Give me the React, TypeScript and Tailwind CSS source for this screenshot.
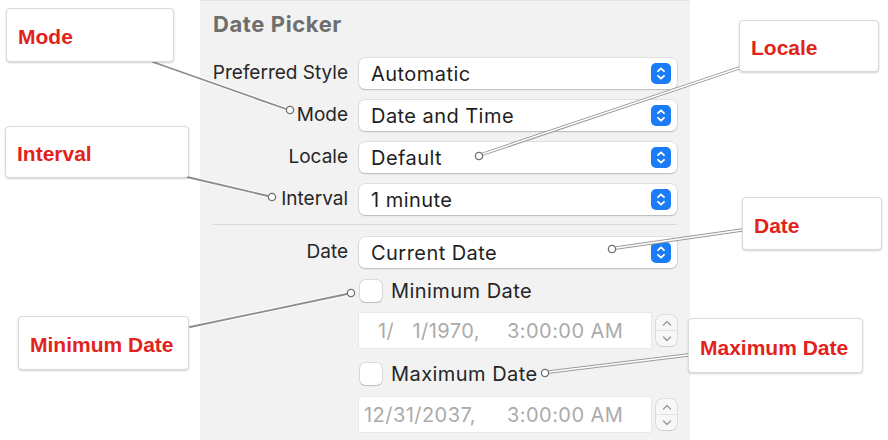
import React from "react";

const font = { fontFamily: "Inter, 'Noto Sans', sans-serif" };

function BlueArrows() {
  return (
    <div className="w-[20px] h-[21px] rounded-[5px] bg-[#1a7cf6] flex items-center justify-center">
      <svg width="20" height="21" viewBox="0 0 20 21" fill="none">
        <path d="M7 8.2 L10 5.3 L13 8.2" stroke="white" strokeWidth="1.8" strokeLinecap="round" strokeLinejoin="round" />
        <path d="M7 12.8 L10 15.7 L13 12.8" stroke="white" strokeWidth="1.8" strokeLinecap="round" strokeLinejoin="round" />
      </svg>
    </div>
  );
}

function Popup({ value }: { value: string }) {
  return (
    <div className="h-[31px] bg-white rounded-[6px] shadow-[0_0_0_0.5px_rgba(0,0,0,0.14),0_1px_1.5px_rgba(0,0,0,0.18)] flex items-center pl-[12px] pr-[6px]">
      <span className="flex-1 text-[20px] tracking-[0.45px] text-[#1e1e1e] leading-none">{value}</span>
      <BlueArrows />
    </div>
  );
}

function Stepper() {
  return (
    <div className="w-[21px] h-[31px] rounded-[6px] bg-[#f7f7f7] shadow-[0_0_0_0.5px_rgba(0,0,0,0.16),0_1px_1px_rgba(0,0,0,0.08)] flex flex-col">
      <div className="flex-1 flex items-center justify-center border-b border-[#e2e2e2]">
        <svg width="12" height="8" viewBox="0 0 12 8" fill="none">
          <path d="M2.5 6 L6 2.5 L9.5 6" stroke="#9a9a9a" strokeWidth="1.4" strokeLinecap="round" strokeLinejoin="round" />
        </svg>
      </div>
      <div className="flex-1 flex items-center justify-center">
        <svg width="12" height="8" viewBox="0 0 12 8" fill="none">
          <path d="M2.5 2 L6 5.5 L9.5 2" stroke="#9a9a9a" strokeWidth="1.4" strokeLinecap="round" strokeLinejoin="round" />
        </svg>
      </div>
    </div>
  );
}

function Checkbox() {
  return (
    <div className="w-[22px] h-[22px] rounded-[5px] bg-white shadow-[0_0_0_0.5px_rgba(0,0,0,0.2),0_1px_1px_rgba(0,0,0,0.12)]" />
  );
}

function DateField({ date, pl, dw }: { date: string; pl: string; dw: string }) {
  return (
    <div className="flex items-center gap-[5px]">
      <div className={`w-[292px] h-[35px] bg-white shadow-[0_0_0_0.5px_rgba(0,0,0,0.08)] flex items-center text-[20px] tracking-[0.45px] text-[#ababab] leading-none whitespace-pre ${pl}`}>
        <span className={`${dw}`}>{date}</span>
        <span>3:00:00 AM</span>
      </div>
      <Stepper />
    </div>
  );
}

function Callout({ text, cls }: { text: string; cls: string }) {
  return (
    <div
      className={`absolute bg-white rounded-[4px] border border-[#dadada] shadow-[0_1px_2px_rgba(0,0,0,0.18)] flex items-center pl-[11px] pt-[3px] ${cls}`}
      style={{ fontFamily: "'Liberation Sans', Arial, sans-serif" }}
    >
      <span className="text-[21px] font-bold text-[#e2231c] leading-none">{text}</span>
    </div>
  );
}

export default function App() {
  const rows: [string, string][] = [
    ["Preferred Style", "Automatic"],
    ["Mode", "Date and Time"],
    ["Locale", "Default"],
    ["Interval", "1 minute"],
  ];
  const solid = (d: string) => (
    <g>
      <path d={d} stroke="white" strokeWidth="3.6" strokeLinecap="round" />
      <path d={d} stroke="#8d8d8d" strokeWidth="1.8" strokeLinecap="round" />
    </g>
  );
  const dbl = (d: string) => (
    <g>
      <path d={d} stroke="#9a9a9a" strokeWidth="3.4" strokeLinecap="round" />
      <path d={d} stroke="white" strokeWidth="1.4" strokeLinecap="round" />
    </g>
  );
  const dot = (x: number, y: number) => (
    <circle cx={x} cy={y} r="3.6" fill="white" stroke="#707070" strokeWidth="1.3" />
  );
  const label = "h-[31px] flex items-center justify-end whitespace-nowrap text-[19px] pr-[2px] text-[#262626]";
  return (
    <div className="relative w-[888px] h-[440px] bg-white overflow-hidden flex" style={font}>
      <div className="ml-[200px] w-[490px] h-full bg-[#f2f2f2] border-t border-[#e4e4e4] pl-[13px] flex flex-col">
        <div className="pt-[10px] text-[22px] leading-[26px] font-bold text-[#6e6e6e] tracking-[0.6px]">Date Picker</div>
        <div className="mt-[21px] grid grid-cols-[137px_318px] gap-x-[9px] gap-y-[11px]">
          {rows.map(([l, v]) => (
            <React.Fragment key={l}>
              <div className={label}>{l}</div>
              <Popup value={v} />
            </React.Fragment>
          ))}
        </div>
        <div className="mt-[9px] w-[464px] h-px bg-[#d9d9d9]" />
        <div className="mt-[12px] grid grid-cols-[137px_318px] gap-x-[9px]">
          <div className={label}>Date</div>
          <Popup value="Current Date" />
        </div>
        <div className="pl-[146px] flex flex-col">
          <div className="mt-[11px] h-[24px] flex items-center gap-[9px] pl-px">
            <Checkbox />
            <span className="text-[20px] tracking-[0.45px] text-[#262626]">Minimum Date</span>
          </div>
          <div className="mt-[10px]">
            <DateField date={"1/   1/1970,"} pl="pl-[19px]" dw="w-[129px]" />
          </div>
          <div className="mt-[14px] h-[24px] flex items-center gap-[9px] pl-px">
            <Checkbox />
            <span className="text-[20px] tracking-[0.45px] text-[#262626]">Maximum Date</span>
          </div>
          <div className="mt-[11px]">
            <DateField date={"12/31/2037,"} pl="pl-[5px]" dw="w-[143px]" />
          </div>
        </div>
      </div>

      <svg className="absolute inset-0 pointer-events-none" width="888" height="440" fill="none">
        {solid("M153 62 L286 109")}
        {solid("M187 177 L268 196")}
        {dbl("M739 68 L483 154")}
        {dbl("M742 230 L616 248")}
        {solid("M190 327 L347 294")}
        {dbl("M688 355 L549 372")}
        {dot(290, 110)}
        {dot(272, 197)}
        {dot(479, 156)}
        {dot(612, 249)}
        {dot(351, 293)}
        {dot(545, 373)}
      </svg>

      <Callout text="Mode" cls="left-[6px] top-[8px] w-[168px] h-[54px]" />
      <Callout text="Interval" cls="left-[5px] top-[126px] w-[184px] h-[52px]" />
      <Callout text="Locale" cls="left-[739px] top-[20px] w-[140px] h-[52px]" />
      <Callout text="Date" cls="left-[742px] top-[197px] w-[140px] h-[53px]" />
      <Callout text="Minimum Date" cls="left-[18px] top-[316px] w-[171px] h-[54px]" />
      <Callout text="Maximum Date" cls="left-[688px] top-[318px] w-[175px] h-[55px]" />
    </div>
  );
}
